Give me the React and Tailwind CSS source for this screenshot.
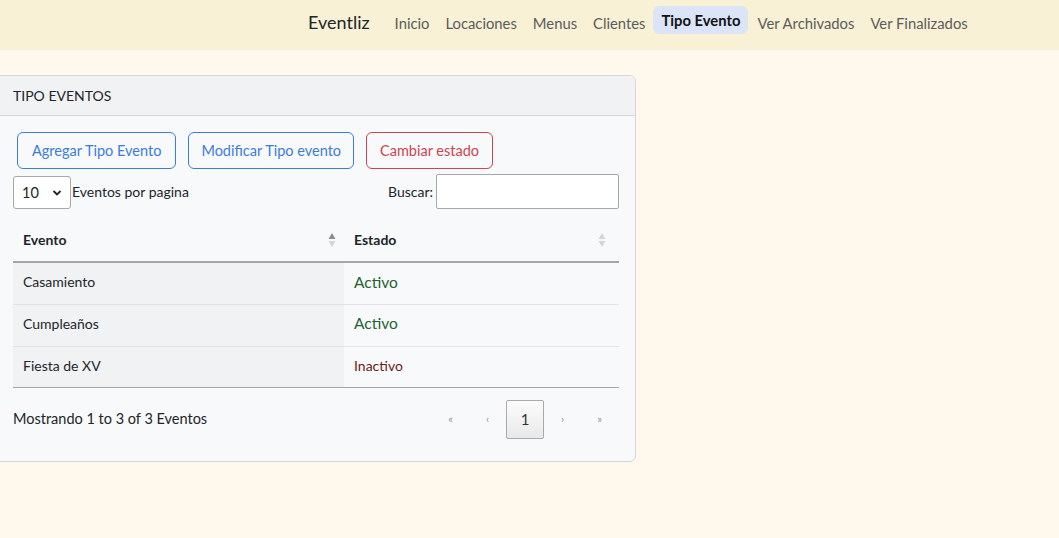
import React from "react";

function SortIcon({ active }) {
  return (
    <svg width="8" height="16" viewBox="0 0 8 16" className="shrink-0">
      <path d="M4 1 L7.5 7 L0.5 7 Z" fill={active ? "#8e8e8e" : "#d4d4d4"} />
      <path d="M4 15 L7.5 9 L0.5 9 Z" fill="#d4d4d4" />
    </svg>
  );
}

export default function App() {
  const rows = [
    { evento: "Casamiento", estado: "Activo", active: true },
    { evento: "Cumpleaños", estado: "Activo", active: true },
    { evento: "Fiesta de XV", estado: "Inactivo", active: false },
  ];
  return (
    <div className="w-[1059px] h-[538px] bg-[#fef9ec] overflow-hidden" style={{ fontFamily: "Lato, 'Noto Sans', sans-serif" }}>
      <nav className="h-[50px] bg-[#f8f1d5] flex items-center">
        <div className="flex items-center ml-[308px] mb-[4px]">
          <span className="text-[18px] text-[#212529] mr-[25px] mb-[1px]">Eventliz</span>
          <div className="flex items-center text-[14.8px] text-[#5b5b5b]">
            <span className="mr-[16px]">Inicio</span>
            <span className="mr-[16px]">Locaciones</span>
            <span className="mr-[16px]">Menus</span>
            <span className="mr-[8px]">Clientes</span>
            <span className="px-[8px] h-[28px] mb-[6px] flex items-center rounded-[6px] bg-[#dbe5f7] font-bold text-[#111] mr-[9px]">Tipo Evento</span>
            <span className="mr-[16px]">Ver Archivados</span>
            <span>Ver Finalizados</span>
          </div>
        </div>
      </nav>
      <div className="pt-[25px]">
        <div className="ml-[-7px] w-[643px] border border-[#d6d7da] rounded-[6px] bg-[#f8f9fb] overflow-hidden">
          <div className="h-[40px] bg-[#f1f2f4] border-b border-[#d6d7da] flex items-center pl-[19px] text-[14px] text-[#212529]">TIPO EVENTOS</div>
          <div className="pl-[19px] pr-[16px] pt-[16px] pb-[22px]">
            <div className="flex gap-[12px] pl-[4px]">
              <button className="h-[37px] px-[14px] border border-[#3b7ddd] rounded-[6px] text-[#3b7ddd] text-[14.5px]">Agregar Tipo Evento</button>
              <button className="h-[37px] px-[12px] border border-[#3b7ddd] rounded-[6px] text-[#3b7ddd] text-[14.5px]">Modificar Tipo evento</button>
              <button className="h-[37px] px-[13px] border border-[#d0434f] rounded-[6px] text-[#d0434f] text-[14.5px]">Cambiar estado</button>
            </div>
            <div className="flex items-center justify-between mt-[5px] w-[606px]">
              <div className="flex items-center text-[14px] text-[#212529]">
                <div className="w-[58px] h-[33px] border border-[#a8a8a8] rounded-[3px] bg-white flex items-center justify-between px-[8px] mt-[2px]">
                  <span className="text-[14.5px]">10</span>
                  <svg width="10" height="10" viewBox="0 0 10 10"><path d="M1.5 3 L5 6.5 L8.5 3" stroke="#222" strokeWidth="1.8" fill="none" /></svg>
                </div>
                <span className="ml-[1px]">Eventos por pagina</span>
              </div>
              <div className="flex items-center text-[14px] text-[#212529]">
                <span className="mr-[3px]">Buscar:</span>
                <div className="w-[183px] h-[35px] border border-[#a8a8a8] rounded-[2px] bg-white"></div>
              </div>
            </div>
            <table className="w-[606px] mt-[9px] border-collapse text-[14px] text-[#212529]">
              <thead>
                <tr className="h-[44px] border-b-2 border-[#a6a6a6]">
                  <th className="w-[331px] text-left font-bold pl-[10px] pr-[8px]">
                    <div className="flex items-center justify-between">Evento<SortIcon active /></div>
                  </th>
                  <th className="text-left font-bold pl-[10px] pr-[13px]">
                    <div className="flex items-center justify-between">Estado<SortIcon /></div>
                  </th>
                </tr>
              </thead>
              <tbody>
                {rows.map((r, i) => (
                  <tr key={r.evento} className={`${i < 2 ? "h-[42px]" : "h-[41px]"} ${i < 2 ? "border-b border-[#e2e3e5]" : "border-b border-[#a6a6a6]"}`}>
                    <td className="bg-[#f1f2f4] pl-[10px] pb-[3px]">{r.evento}</td>
                    <td className={`pl-[10px] pb-[2px] ${r.active ? "text-[#23632f] text-[15.5px]" : "text-[#6b1a1a]"}`}>{r.estado}</td>
                  </tr>
                ))}
              </tbody>
            </table>
            <div className="flex items-center justify-between mt-[12px] w-[606px]">
              <span className="text-[14.5px] text-[#212529]">Mostrando 1 to 3 of 3 Eventos</span>
              <div className="flex items-center text-[11px] text-[#9a9a9a] mr-[1px]">
                <span className="w-[37px] text-center">«</span>
                <span className="w-[37px] text-center">‹</span>
                <span className="w-[38px] h-[39px] border border-[#a9a9a9] rounded-[2px] bg-gradient-to-b from-[#fcfcfc] to-[#e9e9e9] flex items-center justify-center text-[15px] text-[#333]">1</span>
                <span className="w-[37px] text-center">›</span>
                <span className="w-[37px] text-center">»</span>
              </div>
            </div>
          </div>
        </div>
      </div>
    </div>
  );
}
